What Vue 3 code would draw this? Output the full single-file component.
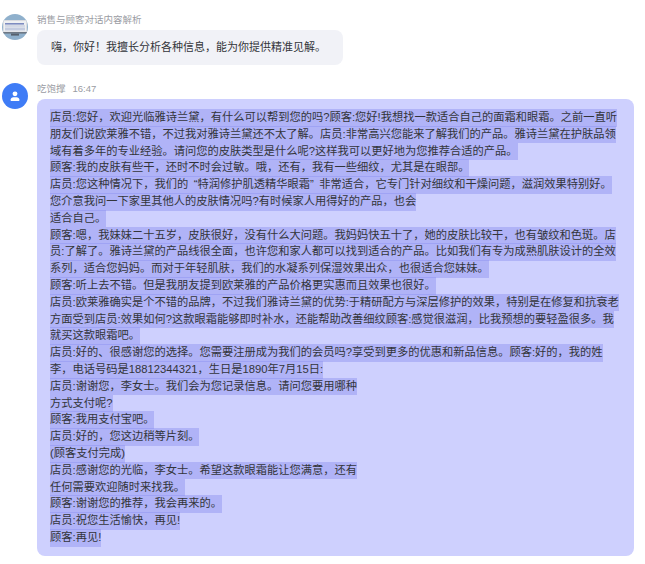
<script setup>
const lines = [
  '店员:您好，欢迎光临雅诗兰黛，有什么可以帮到您的吗?顾客:您好!我想找一款适合自己的面霜和眼霜。之前一直听',
  '朋友们说欧莱雅不错，不过我对雅诗兰黛还不太了解。店员:非常高兴您能来了解我们的产品。雅诗兰黛在护肤品领',
  '域有着多年的专业经验。请问您的皮肤类型是什么呢?这样我可以更好地为您推荐合适的产品。',
  '顾客:我的皮肤有些干，还时不时会过敏。哦，还有，我有一些细纹，尤其是在眼部。',
  '店员:您这种情况下，我们的 “特润修护肌透精华眼霜” 非常适合，它专门针对细纹和干燥问题，滋润效果特别好。',
  '您介意我问一下家里其他人的皮肤情况吗?有时候家人用得好的产品，也会',
  '适合自己。',
  '顾客:嗯，我妹妹二十五岁，皮肤很好，没有什么大问题。我妈妈快五十了，她的皮肤比较干，也有皱纹和色斑。店',
  '员:了解了。雅诗兰黛的产品线很全面，也许您和家人都可以找到适合的产品。比如我们有专为成熟肌肤设计的全效',
  '系列，适合您妈妈。而对于年轻肌肤，我们的水凝系列保湿效果出众，也很适合您妹妹。',
  '顾客:听上去不错。但是我朋友提到欧莱雅的产品价格更实惠而且效果也很好。',
  '店员:欧莱雅确实是个不错的品牌，不过我们雅诗兰黛的优势:于精研配方与深层修护的效果，特别是在修复和抗衰老',
  '方面受到店员:效果如何?这款眼霜能够即时补水，还能帮助改善细纹顾客:感觉很滋润，比我预想的要轻盈很多。我',
  '就买这款眼霜吧。',
  '店员:好的、很感谢您的选择。您需要注册成为我们的会员吗?享受到更多的优惠和新品信息。顾客:好的，我的姓',
  '李，电话号码是18812344321，生日是1890年7月15日:',
  '店员:谢谢您，李女士。我们会为您记录信息。请问您要用哪种',
  '方式支付呢?',
  '顾客:我用支付宝吧。',
  '店员:好的，您这边稍等片刻。',
  '(顾客支付完成)',
  '店员:感谢您的光临，李女士。希望这款眼霜能让您满意，还有',
  '任何需要欢迎随时来找我。',
  '顾客:谢谢您的推荐，我会再来的。',
  '店员:祝您生活愉快，再见!',
  '顾客:再见!',
]
</script>

<template>
  <div class="page">
    <div class="msg first">
      <div class="avatar bot">
        <svg width="26" height="26" viewBox="0 0 26 26">
          <rect width="26" height="26" fill="#8fb0cc" />
          <rect x="1" y="6" width="24" height="13" rx="1" fill="#d9dbe0" />
          <rect x="2" y="7" width="22" height="10.5" fill="#eef0f2" />
          <rect x="3" y="9" width="19" height="1.6" fill="#7d8bc0" />
          <rect x="3" y="11.5" width="20" height="1" fill="#b9c2d8" />
          <rect x="3" y="13.5" width="20" height="3" fill="#c4cce0" />
          <rect x="1" y="18" width="24" height="1.6" fill="#6e7884" />
          <rect x="9" y="19.6" width="8" height="2" fill="#56606d" />
        </svg>
      </div>
      <div class="body">
        <div class="meta">销售与顾客对话内容解析</div>
        <div class="bubble grey">嗨，你好！我擅长分析各种信息，能为你提供精准见解。</div>
      </div>
    </div>
    <div class="msg">
      <div class="avatar user">
        <svg width="10" height="10" viewBox="0 0 14 14" fill="#fff">
          <circle cx="7" cy="4" r="3.4" />
          <path d="M1 11.6C1 9.4 3 8.6 7 8.6s6 .8 6 3V14H1z" />
        </svg>
      </div>
      <div class="body">
        <div class="meta">吃饱撑<span class="time">16:47</span></div>
        <div class="bubble purple">
          <div v-for="(line, i) in lines" :key="i" class="line" :class="{ quoted: line.includes('“') }"><span>{{ line }}</span></div>
        </div>
      </div>
    </div>
  </div>
</template>

<style scoped>
.page {
  width: 645px;
  height: 564px;
  box-sizing: border-box;
  padding: 14px 11px 0 2px;
  overflow: hidden;
  background: #fff;
  font-family: "Liberation Sans", "Noto Sans CJK SC", sans-serif;
  color: #33353a;
}
.msg {
  display: flex;
  gap: 9px;
}
.first {
  margin-bottom: 18px;
}
.avatar {
  flex: none;
  width: 26px;
  height: 26px;
  border-radius: 50%;
  overflow: hidden;
  display: flex;
  align-items: center;
  justify-content: center;
}
.user {
  background: #3f7cf6;
}
.body {
  flex: 1;
  min-width: 0;
}
.meta {
  font-size: 9.5px;
  line-height: 12px;
  color: #9a9ca3;
  margin-bottom: 4px;
}
.time {
  margin-left: 7px;
}
.bubble {
  border-radius: 8px;
}
.grey {
  background: #f1f2f7;
  padding: 8px 14px;
  line-height: 19px;
  font-size: 11px;
  width: 306px;
  box-sizing: border-box;
  white-space: nowrap;
}
.purple {
  background: #ced0fe;
  padding: 10px 13px 10px;
  font-size: 11.25px;
}
.line {
  height: 16.8px;
  line-height: 16.8px;
  white-space: nowrap;
}
.quoted {
  word-spacing: 2.5px;
}
.line span {
  display: inline-block;
  vertical-align: top;
  height: 17.6px;
  background: rgba(140, 145, 240, 0.45);
}
</style>
